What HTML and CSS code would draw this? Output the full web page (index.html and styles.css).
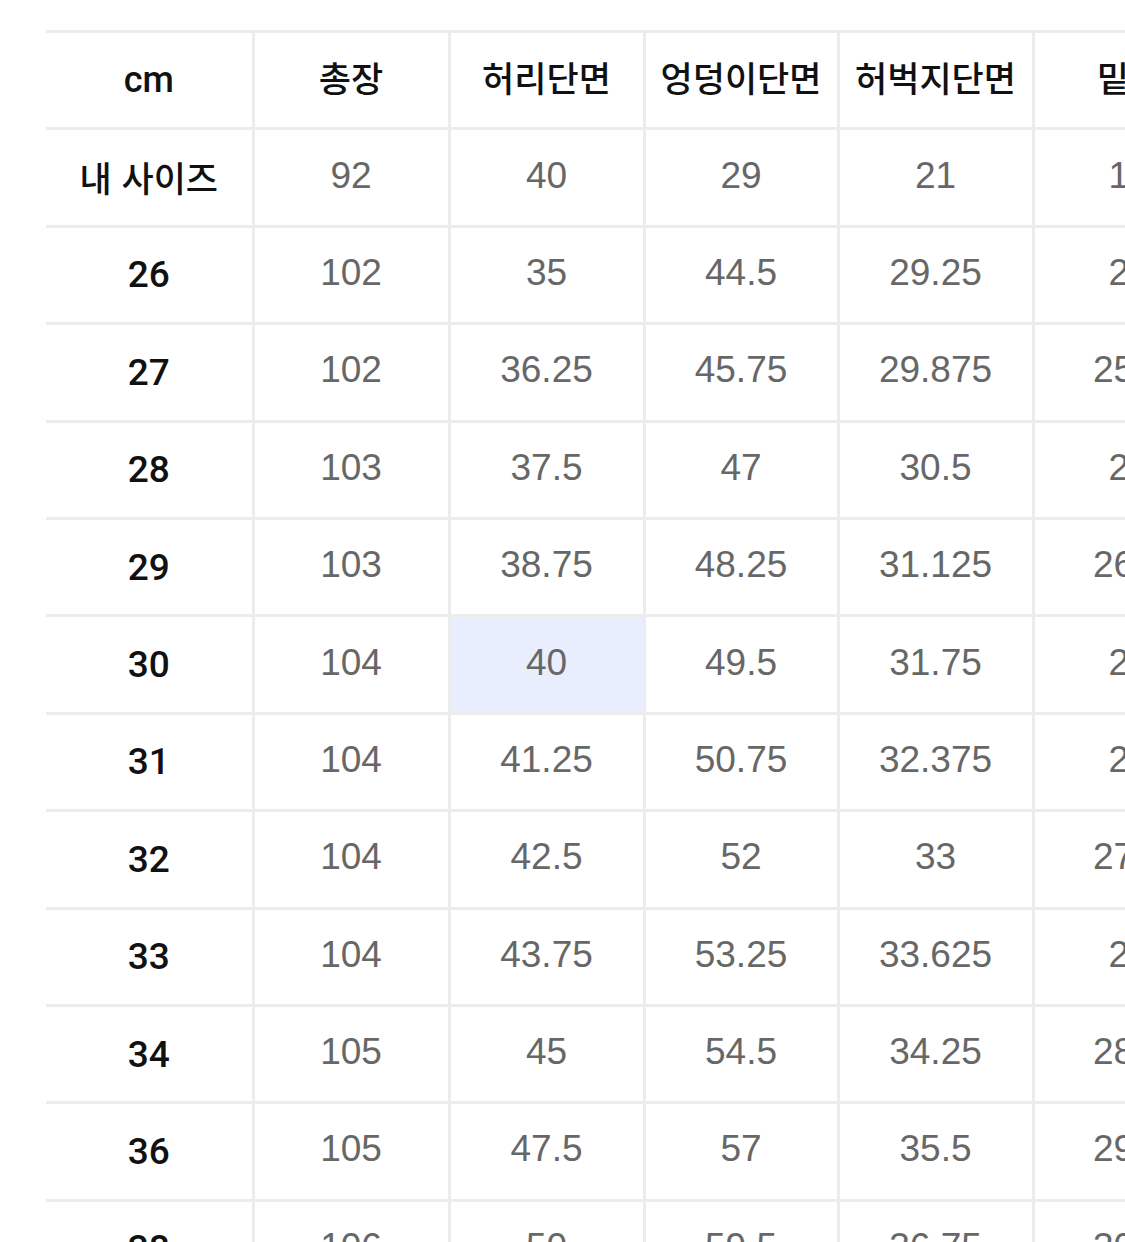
FILE: index.html
```html
<!DOCTYPE html>
<html lang="ko">
<head>
<meta charset="utf-8">
<link rel="stylesheet" href="styles.css">
</head>
<body>
<div class="wrap">
<table class="size">
  <colgroup>
    <col class="c0"><col class="c1"><col class="c2"><col class="c3"><col class="c4"><col class="c5">
  </colgroup>
  <thead>
    <tr><th class="unit">cm</th><th>총장</th><th>허리단면</th><th>엉덩이단면</th><th>허벅지단면</th><th>밑위</th></tr>
  </thead>
  <tbody>
    <tr><th class="mine">내 사이즈</th><td>92</td><td>40</td><td>29</td><td>21</td><td>19</td></tr>
    <tr><th>26</th><td>102</td><td>35</td><td>44.5</td><td>29.25</td><td>25</td></tr>
    <tr><th>27</th><td>102</td><td>36.25</td><td>45.75</td><td>29.875</td><td>25.5</td></tr>
    <tr><th>28</th><td>103</td><td>37.5</td><td>47</td><td>30.5</td><td>26</td></tr>
    <tr><th>29</th><td>103</td><td>38.75</td><td>48.25</td><td>31.125</td><td>26.5</td></tr>
    <tr><th>30</th><td>104</td><td class="hl">40</td><td>49.5</td><td>31.75</td><td>27</td></tr>
    <tr><th>31</th><td>104</td><td>41.25</td><td>50.75</td><td>32.375</td><td>27</td></tr>
    <tr><th>32</th><td>104</td><td>42.5</td><td>52</td><td>33</td><td>27.5</td></tr>
    <tr><th>33</th><td>104</td><td>43.75</td><td>53.25</td><td>33.625</td><td>28</td></tr>
    <tr><th>34</th><td>105</td><td>45</td><td>54.5</td><td>34.25</td><td>28.5</td></tr>
    <tr><th>36</th><td>105</td><td>47.5</td><td>57</td><td>35.5</td><td>29.5</td></tr>
    <tr><th>38</th><td>106</td><td>50</td><td>59.5</td><td>36.75</td><td>30.5</td></tr>
  </tbody>
</table>
</div>
</body>
</html>
```

FILE: styles.css
```css
html, body {
  margin: 0;
  padding: 0;
  background: #ffffff;
  overflow: hidden;
}
.wrap {
  padding: 30px 0 0 46px;
  width: 1300px;
}
.size {
  border-collapse: collapse;
  table-layout: fixed;
  width: 1179px;
  font-family: "Liberation Sans", "Noto Sans CJK KR", sans-serif;
}
.c0 { width: 207px; }
.c1 { width: 196px; }
.c2 { width: 195px; }
.c3 { width: 194px; }
.c4 { width: 195px; }
.c5 { width: 192px; }
.size tr {
  height: 97.4px;
}
.size th, .size td {
  padding: 0;
  text-align: center;
  vertical-align: middle;
  border: 3px solid #ececec;
  line-height: 1;
}
.size tr > :first-child { border-left: none; }
.size thead th {
  border-top: 3px solid #ececec;
  color: #111111;
  font-weight: 500;
  font-family: "Noto Sans CJK KR", "Liberation Sans", sans-serif;
  font-size: 35px;
  padding-bottom: 8px;
}
.size thead th.unit {
  font-family: Roboto, "Liberation Sans", sans-serif;
  font-weight: 500;
  font-size: 36px;
  color: #111111;
  padding-bottom: 0;
}
.size tbody th {
  color: #111111;
  font-family: Roboto, "Liberation Sans", sans-serif;
  font-weight: 500;
  font-size: 37px;
}
.size tbody th.mine {
  font-family: "Noto Sans CJK KR", sans-serif;
  font-weight: 500;
  font-size: 35px;
  padding-bottom: 2px;
}
.size td {
  color: #676767;
  font-size: 37px;
  padding-bottom: 5px;
}
.size td.hl {
  background: #e8eefd;
}
```
